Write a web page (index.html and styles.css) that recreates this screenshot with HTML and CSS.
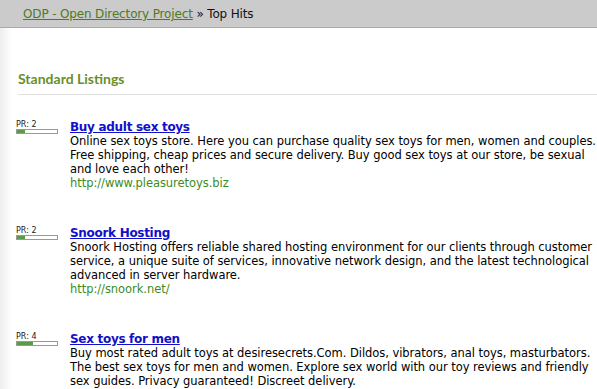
FILE: index.html
```html
<!DOCTYPE html>
<html lang="en">
<head>
    <meta charset="UTF-8" />
    <title>Top Hits - ODP</title>
    <link rel="stylesheet" href="styles.css">
</head>
<body>
<div class="crumbs">
    <a href="#">ODP - Open Directory Project</a> &raquo; Top Hits
</div>
<div class="main">
    <h2>Standard Listings</h2>

    <div class="site">
        <div class="pr">
            <span>PR: 2</span>
            <div class="bar"><div class="fill" style="width: 8px"></div></div>
        </div>
        <div class="info">
            <a class="title" href="#">Buy adult sex toys</a>
            <p>Online sex toys store. Here you can purchase quality sex toys for men, women and couples. Free shipping, cheap prices and secure delivery. Buy good sex toys at our store, be sexual and love each other!</p>
            <a class="url" href="#">http://www.pleasuretoys.biz</a>
        </div>
    </div>

    <div class="site">
        <div class="pr">
            <span>PR: 2</span>
            <div class="bar"><div class="fill" style="width: 8px"></div></div>
        </div>
        <div class="info">
            <a class="title" href="#">Snoork Hosting</a>
            <p>Snoork Hosting offers reliable shared hosting environment for our clients through customer service, a unique suite of services, innovative network design, and the latest technological advanced in server hardware.</p>
            <a class="url" href="#">http://snoork.net/</a>
        </div>
    </div>

    <div class="site">
        <div class="pr">
            <span>PR: 4</span>
            <div class="bar"><div class="fill" style="width: 16px"></div></div>
        </div>
        <div class="info">
            <a class="title" href="#">Sex toys for men</a>
            <p>Buy most rated adult toys at desiresecrets.Com. Dildos, vibrators, anal toys, masturbators. The best sex toys for men and women. Explore sex world with our toy reviews and friendly sex guides. Privacy guaranteed! Discreet delivery.</p>
            <a class="url" href="#">http://www.desiresecrets.com</a>
        </div>
    </div>
</div>
</body>
</html>
```

FILE: styles.css
```css
body {
    margin: 0;
    font-family: "DejaVu Sans", Verdana, sans-serif;
    font-size: 12px;
    color: #000;
    background: linear-gradient(to right, #eeeeee, #fff 12px);
    overflow: hidden;
}
.crumbs {
    height: 27px;
    line-height: 28px;
    padding-left: 23px;
    background: #cbcbcb;
    border-bottom: 1px solid #a9a9a9;
    color: #111;
    letter-spacing: -0.15px;
}
.crumbs a {
    color: #4f7a22;
}
.main {
    width: 585px;
    padding: 0 0 0 16px;
}
h2 {
    margin: 42px 0 0 2px;
    padding-bottom: 7px;
    font-family: Lato, "Open Sans", sans-serif;
    font-size: 14px;
    font-weight: 700;
    color: #6a8f2a;
    border-bottom: 1px solid #e0e0e0;
}
.site {
    display: flex;
    margin-top: 25px;
    margin-bottom: 36px;
}
.pr {
    width: 54px;
    flex-shrink: 0;
    padding-top: 1px;
}
.pr span {
    display: block;
    font-size: 8px;
    line-height: 8px;
    color: #222;
}
.bar {
    width: 40px;
    height: 3px;
    border: 1px solid #999;
    background: #fff;
}
.fill {
    height: 3px;
    background: #5a9a4a;
}
.info {
    flex: 1;
    font-size: 11.5px;
    letter-spacing: -0.05px;
    line-height: 14px;
}
.title {
    display: block;
    font-size: 12px;
    font-weight: bold;
    letter-spacing: -0.3px;
    line-height: 14px;
    color: #1010c8;
}
.info p {
    margin: 0;
}
.url {
    color: #3c8c1e;
    text-decoration: none;
}
```
